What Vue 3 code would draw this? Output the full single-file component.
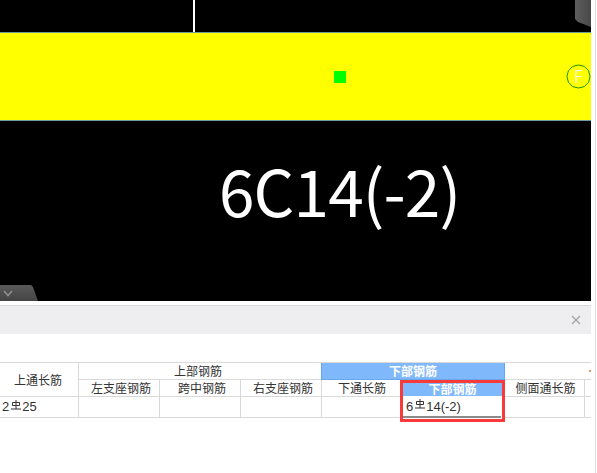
<template>
  <div class="page">
    <!-- 图形区 -->
    <div class="canvas">
      <div class="axis-line"></div>
      <div class="corner-tab"></div>
      <div class="beam">
        <div class="beam-node"></div>
        <svg class="axis-mark" viewBox="0 0 26 26">
          <polygon points="13,1 19,2.5 23.5,7 25,13 23.5,19 19,23.5 13,25 7,23.5 2.5,19 1,13 2.5,7 7,2.5" fill="none" stroke="#128f12" stroke-width="1" />
        </svg>
        <span class="axis-label">F</span>
      </div>
      <div class="beam-text">6C14(-2)</div>
      <div class="fold-tab">
        <svg width="10" height="7" viewBox="0 0 10 7"><path d="M1 1l4 4.5L9 1" fill="none" stroke="#8e8e8e" stroke-width="1.5" /></svg>
      </div>
    </div>

    <!-- 属性面板 -->
    <div class="panel">
      <div class="panel-title">
        <svg class="close-icon" width="10" height="10" viewBox="0 0 10 10"><path d="M1 1l8 8M9 1L1 9" stroke="#a3a3a3" stroke-width="1.3" /></svg>
      </div>
      <div class="table-wrap">
        <div class="grid">
          <div class="cell head first">上通长筋</div>
          <div class="cell group top-group">上部钢筋</div>
          <div class="cell group active">下部钢筋</div>
          <div class="cell group blank"><span class="dot"></span></div>
          <div class="cell" :class="{ nudge: i < 3, 'nudge-sm': i === 5 }" v-for="(c, i) in subCols" :key="i">{{ c }}</div>
          <div class="cell tail"></div>
          <div class="cell value first-value">2<svg class="rebar" viewBox="0 0 10 10"><path d="M5 0v9M1.5 2.5h7v3h-7zM0 9h10" fill="none" stroke="#333" stroke-width="1" /></svg>25</div>
          <div class="cell value" v-for="n in 6" :key="n"></div>
          <div class="cell value tail"></div>
        </div>
        <!-- 当前编辑单元格 -->
        <div class="edit-box">
          <div class="edit-head">下部钢筋</div>
          <div class="edit-input">6<svg class="rebar" viewBox="0 0 10 10"><path d="M5 0v9M1.5 2.5h7v3h-7zM0 9h10" fill="none" stroke="#333" stroke-width="1" /></svg>14(-2)</div>
        </div>
      </div>
    </div>
  </div>
</template>

<script setup>
// 下部钢筋那一格被编辑框盖住，这里留空
const subCols = ['左支座钢筋', '跨中钢筋', '右支座钢筋', '下通长筋', '', '侧面通长筋']
</script>

<style>
html, body { margin: 0; background: #fff; overflow: hidden; }
</style>

<style scoped>
.page {
  width: 596px;
  height: 473px;
  box-sizing: border-box;
  overflow: hidden;
  border-right: 1px solid #dcdcdc;
  font-family: "Noto Sans CJK SC", "Liberation Sans", sans-serif;
  color: #333;
}

.canvas {
  position: relative;
  width: 591px;
  height: 301px;
  padding-top: 32px;
  box-sizing: border-box;
  background: #000;
}

.axis-line {
  position: absolute;
  left: 193px;
  top: 0;
  width: 2px;
  height: 32px;
  background: #fff;
}

.corner-tab {
  position: absolute;
  right: 0;
  top: 0;
  width: 16px;
  height: 27px;
  background: linear-gradient(90deg, #5e5e5e, #484848);
  clip-path: polygon(0 0, 100% 0, 100% 100%, 3px 22px, 0 19px);
}

.beam {
  position: relative;
  height: 87px;
  background: #ff0;
  border-top: 1px solid #6f9aa0;
  border-bottom: 1px solid #6f9aa0;
}

.beam-node {
  position: absolute;
  left: 334px;
  top: 38px;
  width: 12px;
  height: 12px;
  background: #00ff00;
}

.axis-mark {
  position: absolute;
  left: 566px;
  top: 31px;
  width: 25px;
  height: 25px;
}

.axis-label {
  position: absolute;
  left: 574px;
  top: 33px;
  color: #fff;
  font-size: 17px;
  font-weight: 300;
  line-height: 20px;
}

.beam-text {
  margin-top: 28px;
  margin-left: 219px;
  font-family: "Noto Sans CJK SC", sans-serif;
  font-size: 64px;
  font-weight: 400;
  letter-spacing: -0.9px;
  line-height: 80px;
  color: #fff;
  white-space: nowrap;
}

.fold-tab {
  position: absolute;
  left: 0;
  bottom: 0;
  width: 38px;
  height: 16px;
  background: linear-gradient(180deg, #5a5a5a, #444);
  clip-path: polygon(0 0, 31px 0, 33px 2px, 38px 100%, 0 100%);
  display: flex;
  align-items: center;
  padding-left: 3px;
  box-sizing: border-box;
}

.panel {
  width: 591px;
  height: 172px;
  box-sizing: border-box;
  padding-top: 4px;
}

.panel-title {
  height: 29px;
  box-sizing: border-box;
  border-top: 1px solid #d9d9d9;
  background: #eeeef0;
  display: flex;
  align-items: center;
  justify-content: flex-end;
  padding-right: 10px;
}

.table-wrap {
  position: relative;
  margin-top: 28px;
}

.grid {
  display: grid;
  grid-template-columns: 79px 81px 81px 81px 81px 102px 80px 6px;
  grid-template-rows: 17px 17px 20px;
  border-top: 1px solid #d9d9d9;
  border-bottom: 1px solid #d9d9d9;
  font-size: 12px;
}

.cell {
  display: flex;
  align-items: center;
  justify-content: center;
  box-sizing: border-box;
  border-right: 1px solid #d9d9d9;
  border-bottom: 1px solid #d9d9d9;
  line-height: 16px;
  white-space: nowrap;
  overflow: hidden;
}

.head.first { grid-row: span 2; padding-right: 2px; }
.group { grid-column: span 3; }
.top-group { padding-right: 4px; }
.nudge { padding-left: 4px; }
.nudge-sm { padding-left: 2px; }
.group.active {
  grid-column: span 2;
  margin-left: -1px;
  background: #7fb9fb;
  color: #fff;
  font-weight: 700;
  border: 1px solid #68a6ec;
  border-top: none;
}
.group.blank { grid-column: span 2; justify-content: flex-end; border-right: none; }
.dot {
  width: 2px;
  height: 2px;
  background: #e39a66;
}
.tail { border-right: none; }

.first-value {
  justify-content: flex-start;
  padding-left: 2px;
  font-family: "Liberation Sans", sans-serif;
  font-size: 13px;
}

.value { border-bottom: none; }

.rebar {
  width: 10px;
  height: 10px;
  margin: -4px 1px 0 2px;
  flex: none;
}

.edit-box {
  position: absolute;
  left: 400px;
  top: 18px;
  width: 105px;
  height: 42px;
  box-sizing: border-box;
  border: 3px solid #f93a3a;
  background: #fff;
}

.edit-head {
  height: 13px;
  line-height: 12px;
  background: #7fb9fb;
  color: #fff;
  font-size: 12px;
  font-weight: 700;
  text-align: center;
}

.edit-input {
  height: 22px;
  box-sizing: border-box;
  margin-right: 1px;
  padding-left: 3px;
  font-family: "Liberation Sans", sans-serif;
  font-size: 13px;
  border-bottom: 2px solid #8a8a8a;
  display: flex;
  align-items: center;
}
</style>
